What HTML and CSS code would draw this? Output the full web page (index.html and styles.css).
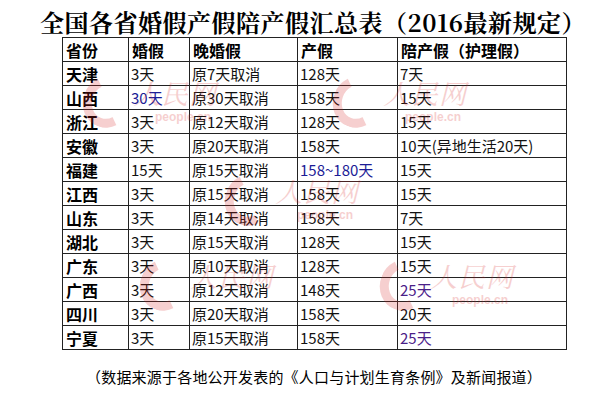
FILE: index.html
```html
<!DOCTYPE html>
<html lang="zh-CN">
<head>
<meta charset="utf-8">
<title>全国各省婚假产假陪产假汇总表</title>
<link rel="stylesheet" href="styles.css">
</head>
<body>
<div class="page">
  <h1 class="title">全国各省婚假产假陪产假汇总表（2016最新规定）</h1>
  <table class="grid">
    <colgroup>
      <col class="c1"><col class="c2"><col class="c3"><col class="c4"><col class="c5">
    </colgroup>
    <thead>
      <tr><th>省份</th><th>婚假</th><th>晚婚假</th><th>产假</th><th>陪产假（护理假）</th></tr>
    </thead>
    <tbody>
      <tr><th>天津</th><td>3天</td><td>原7天取消</td><td>128天</td><td>7天</td></tr>
      <tr><th>山西</th><td class="blue">30天</td><td>原30天取消</td><td>158天</td><td>15天</td></tr>
      <tr><th>浙江</th><td>3天</td><td>原12天取消</td><td>128天</td><td>15天</td></tr>
      <tr><th>安徽</th><td>3天</td><td>原20天取消</td><td>158天</td><td>10天(异地生活20天)</td></tr>
      <tr><th>福建</th><td>15天</td><td>原15天取消</td><td class="blue">158~180天</td><td>15天</td></tr>
      <tr><th>江西</th><td>3天</td><td>原15天取消</td><td>158天</td><td>15天</td></tr>
      <tr><th>山东</th><td>3天</td><td>原14天取消</td><td>158天</td><td>7天</td></tr>
      <tr><th>湖北</th><td>3天</td><td>原15天取消</td><td>128天</td><td>15天</td></tr>
      <tr><th>广东</th><td>3天</td><td>原10天取消</td><td>128天</td><td>15天</td></tr>
      <tr><th>广西</th><td>3天</td><td>原12天取消</td><td>148天</td><td class="purple">25天</td></tr>
      <tr><th>四川</th><td>3天</td><td>原20天取消</td><td>158天</td><td>20天</td></tr>
      <tr><th>宁夏</th><td>3天</td><td>原15天取消</td><td>158天</td><td class="purple">25天</td></tr>
    </tbody>
  </table>
  <p class="note">（数据来源于各地公开发表的《人口与计划生育条例》及新闻报道）</p>

  <div class="wm wm1"><span class="moon"></span><span class="wm-cn">人民网</span><span class="wm-en">people.cn</span></div>
  <div class="wm wm2"><span class="moon"></span><span class="wm-cn">人民网</span><span class="wm-en">people.cn</span></div>
  <div class="wm wm3"><span class="moon"></span><span class="wm-cn">人民网</span><span class="wm-en">people.cn</span></div>
  <div class="wm wm4"><span class="moon"></span><span class="wm-cn">人民网</span></div>
  <div class="wm wm5"><span class="moon"></span><span class="wm-cn">人民网</span><span class="wm-en">people.cn</span></div>
</div>
</body>
</html>
```
FILE: styles.css
```css
html, body {
  margin: 0;
  padding: 0;
  background: #ffffff;
}
body {
  font-family: "Noto Serif CJK SC", "Noto Sans CJK SC", "Liberation Serif", serif;
  color: #000;
}
.page {
  position: relative;
  width: 598px;
  height: 402px;
  overflow: hidden;
}
.title {
  margin: 0;
  height: 37px;
  padding-left: 40px;
  font-size: 24px;
  line-height: 44px;
  font-weight: 700;
  letter-spacing: 0.5px;
  white-space: nowrap;
}
.grid {
  margin-left: 62px;
  border-collapse: collapse;
  table-layout: fixed;
  width: 504px;
  border: 1px solid #666;
}
.c1 { width: 66px; }
.c2 { width: 61px; }
.c3 { width: 108px; }
.c4 { width: 100px; }
.c5 { width: 169px; }
.grid th, .grid td {
  border: 1px solid #222;
  height: 23px;
  padding: 0 0 0 2px;
  text-align: left;
  vertical-align: middle;
  white-space: nowrap;
  font-family: "Noto Sans CJK SC", "Liberation Sans", sans-serif;
  line-height: 22px;
}
.grid th {
  font-size: 16px;
  font-weight: 700;
  padding-left: 3px;
}
.grid td {
  font-size: 15px;
  font-weight: 400;
  color: #111;
}
.grid td.blue { color: #1c1c96; }
.grid td.purple { color: #4a2088; }
.note {
  margin: 17px 0 0 86px;
  font-family: "Noto Sans CJK SC", "Liberation Sans", sans-serif;
  font-size: 15px;
  line-height: 20px;
  white-space: nowrap;
  letter-spacing: 0.2px;
}
.wm {
  position: absolute;
  width: 140px;
  height: 52px;
  pointer-events: none;
  opacity: 0.22;
}
.moon {
  position: absolute;
  left: 0;
  top: 2px;
  width: 30px;
  height: 34px;
  border-radius: 50%;
  border: 9px solid #d82828;
  border-right-color: transparent;
  border-top-color: transparent;
  transform: rotate(20deg);
}
.wm-cn {
  position: absolute;
  left: 50px;
  top: 4px;
  font-family: "Noto Serif CJK SC", "Noto Sans CJK SC", serif;
  font-size: 27px;
  line-height: 30px;
  font-style: italic;
  color: #d82828;
  letter-spacing: 1px;
}
.wm-en {
  position: absolute;
  left: 72px;
  top: 36px;
  font-family: "Liberation Sans", sans-serif;
  font-size: 12px;
  line-height: 14px;
  font-weight: 700;
  color: #d82828;
}
.wm1 { left: 83px; top: 74px; }
.wm2 { left: 333px; top: 74px; }
.wm3 { left: 225px; top: 172px; }
.wm4 { left: 140px; top: 257px; }
.wm5 { left: 380px; top: 257px; }
```
